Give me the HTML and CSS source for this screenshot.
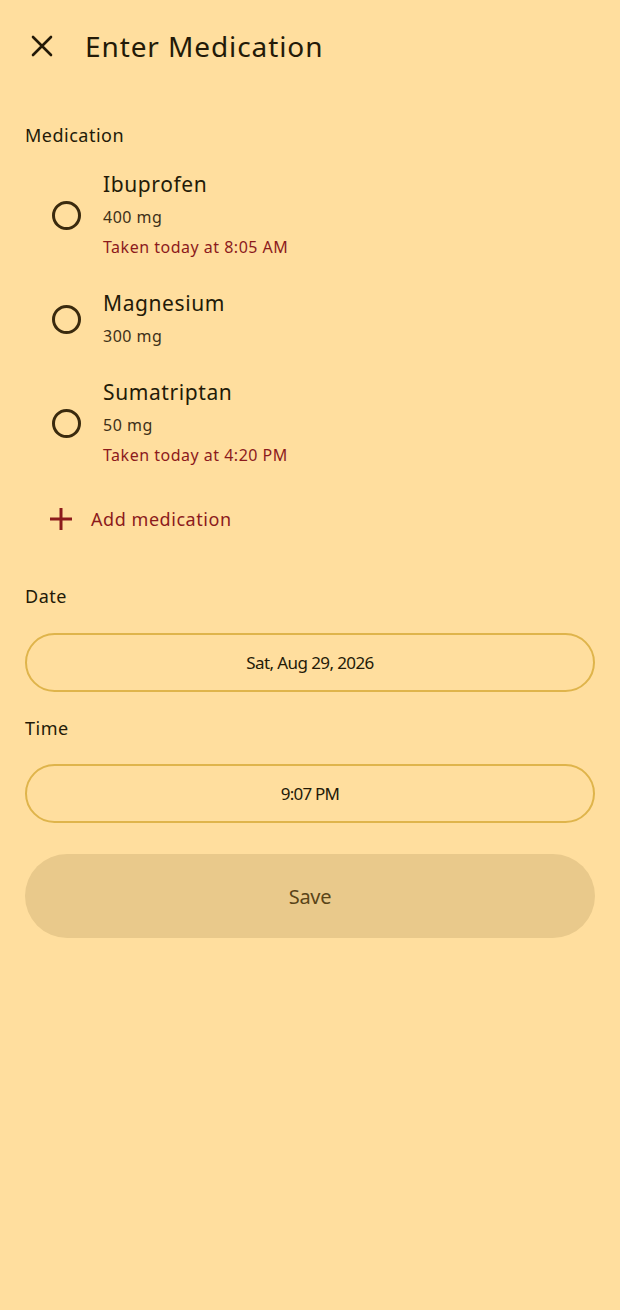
FILE: index.html
```html
<!DOCTYPE html>
<html>
  <head>
    <meta charset="UTF-8" />
    <meta name="viewport" content="width=device-width, initial-scale=1.0" />
    <title>Enter Medication</title>
    <link rel="stylesheet" href="styles.css">
  </head>

  <body>
    <header class="top-bar">
      <button class="icon-button" aria-label="Close">
        <svg width="24" height="24" viewBox="0 0 24 24">
          <path d="M3 3 L21 21 M21 3 L3 21" stroke="#231a08" stroke-width="2.6" stroke-linecap="round" />
        </svg>
      </button>
      <h1 class="title">Enter Medication</h1>
    </header>

    <main class="form">
      <div class="section-label">Medication</div>

      <ul class="med-list">
        <li class="med-item">
          <span class="radio"></span>
          <div class="med-text">
            <div class="med-name">Ibuprofen</div>
            <div class="med-dose">400 mg</div>
            <div class="med-taken">Taken today at 8:05 AM</div>
          </div>
        </li>
        <li class="med-item">
          <span class="radio"></span>
          <div class="med-text">
            <div class="med-name">Magnesium</div>
            <div class="med-dose">300 mg</div>
          </div>
        </li>
        <li class="med-item">
          <span class="radio"></span>
          <div class="med-text">
            <div class="med-name">Sumatriptan</div>
            <div class="med-dose">50 mg</div>
            <div class="med-taken">Taken today at 4:20 PM</div>
          </div>
        </li>
      </ul>

      <button class="add-button">
        <svg width="22" height="22" viewBox="0 0 22 22">
          <path d="M11 0 V22 M0 11 H22" stroke="#8c1a1c" stroke-width="3" />
        </svg>
        <span>Add medication</span>
      </button>

      <div class="section-label date-label">Date</div>
      <button class="field">Sat, Aug 29, 2026</button>

      <div class="section-label time-label">Time</div>
      <button class="field time-field">9:07 PM</button>

      <button class="save-button">Save</button>
    </main>
  </body>
</html>
```

FILE: styles.css
```css
html,
body {
  background-color: #ffde9e;
}

body {
  margin: 0;
  min-height: 1310px;
  font-family: "Noto Sans", sans-serif;
  color: #231a08;
}

button {
  font-family: inherit;
  cursor: pointer;
}

.top-bar {
  display: flex;
  align-items: center;
  height: 92px;
  padding-left: 30px;
}

.icon-button {
  background: none;
  border: none;
  padding: 0;
  width: 24px;
  height: 24px;
  display: flex;
}

.title {
  margin: 0 0 0 31px;
  font-size: 28px;
  font-weight: normal;
  line-height: 36px;
  letter-spacing: 0.9px;
}

.form {
  padding: 0 25px;
  display: flex;
  flex-direction: column;
}

.section-label {
  font-size: 18px;
  line-height: 24px;
  margin-top: 31px;
  letter-spacing: 0.5px;
}

.med-list {
  list-style: none;
  margin: 22px 0 0;
  padding: 0;
  display: flex;
  flex-direction: column;
  row-gap: 26px;
}

.med-item {
  display: flex;
  align-items: center;
}

.radio {
  width: 23px;
  height: 23px;
  border: 3px solid #3a2a0e;
  border-radius: 50%;
  margin-left: 27px;
  margin-right: 22px;
}

.med-name {
  font-size: 21px;
  line-height: 30px;
  margin-bottom: 3px;
  letter-spacing: 0.6px;
}

.med-dose,
.med-taken {
  font-size: 16px;
  line-height: 30px;
  letter-spacing: 0.5px;
  color: #3e3018;
}

.med-taken {
  color: #8c1a1c;
}

.add-button {
  margin-top: 25px;
  background: none;
  border: none;
  padding: 0 0 0 25px;
  height: 48px;
  display: flex;
  align-items: center;
  column-gap: 19px;
  color: #8c1a1c;
  font-size: 18px;
  letter-spacing: 0.55px;
}

.date-label {
  margin-top: 41px;
}

.time-label {
  margin-top: 24px;
}

.field {
  margin-top: 25px;
  height: 59px;
  border: 2px solid #dfb44b;
  border-radius: 30px;
  background: transparent;
  font-size: 17px;
  letter-spacing: -0.6px;
  color: #231a08;
}

.time-field {
  margin-top: 24px;
  letter-spacing: -0.8px;
}

.save-button {
  margin-top: 31px;
  height: 84px;
  border: none;
  border-radius: 42px;
  background-color: #e9c98b;
  color: #5a4418;
  font-size: 20px;
  letter-spacing: -0.3px;
}
```
